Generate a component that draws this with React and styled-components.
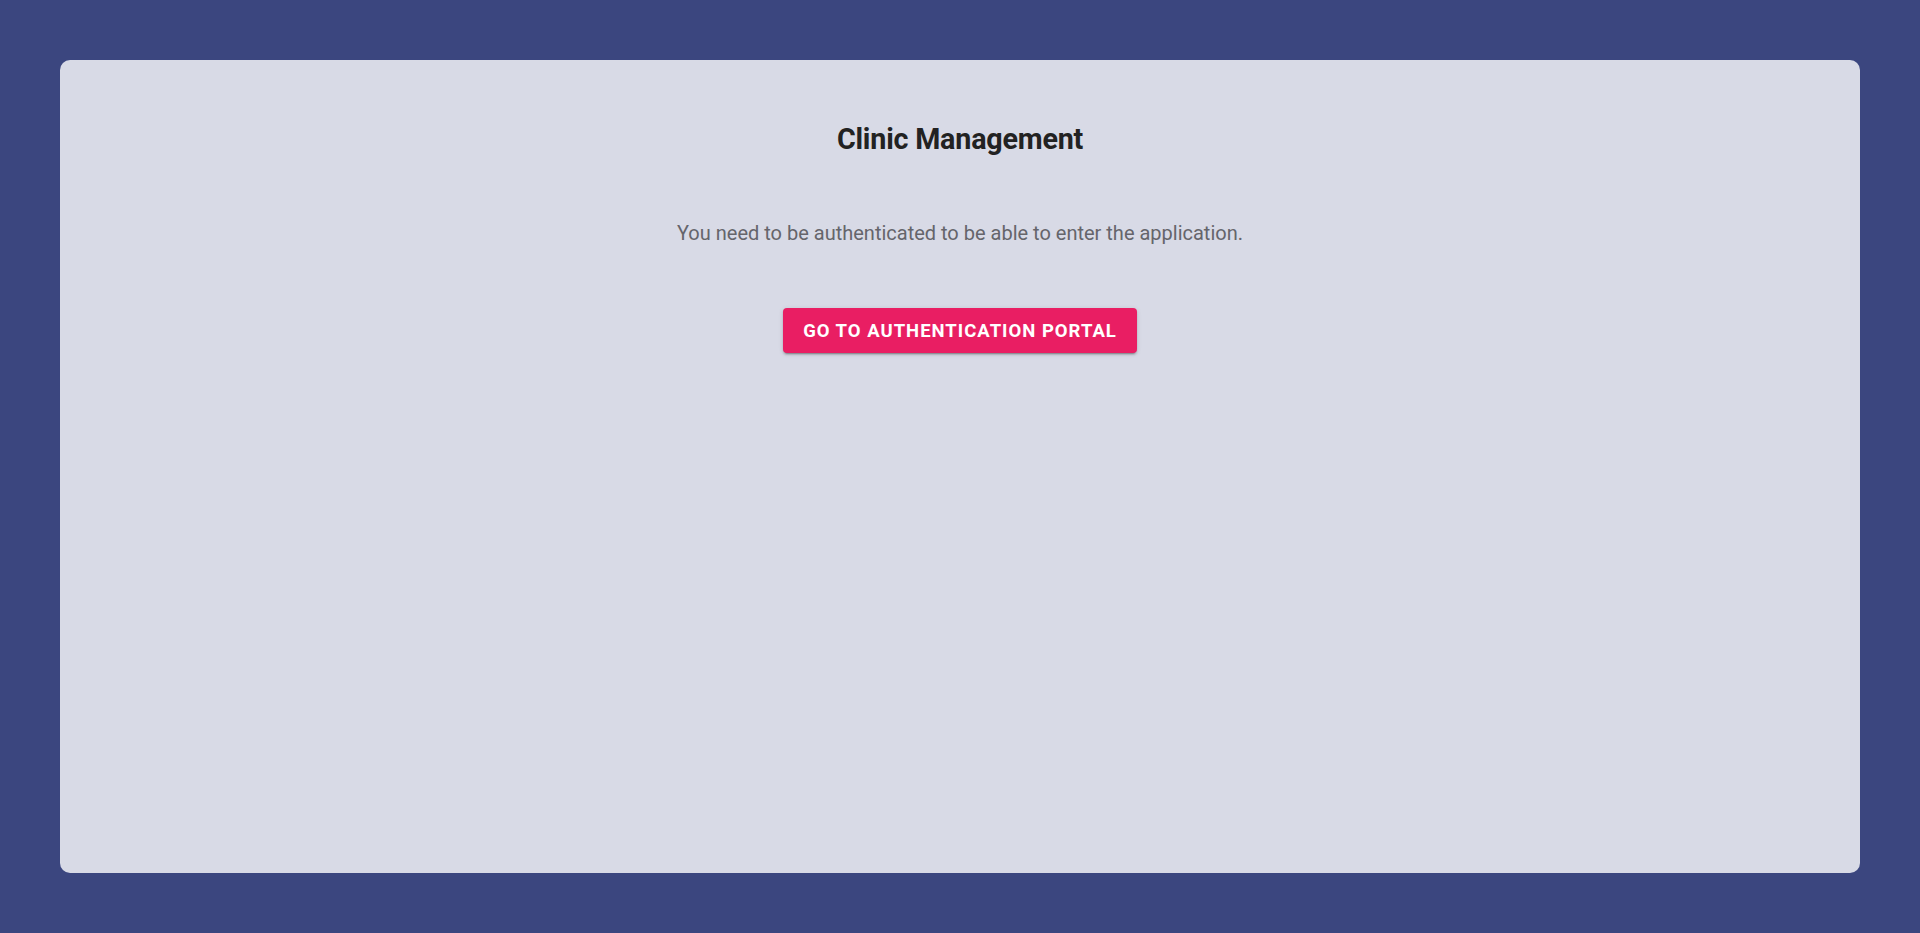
import styled, { createGlobalStyle } from "styled-components";

const GlobalStyle = createGlobalStyle`
    html, body {
        margin: 0;
        padding: 0;
        height: 100%;
        background: #3b467f;
    }
    #root {
        height: 100%;
    }
    * {
        box-sizing: border-box;
    }
`;

const Page = styled("main")`
    height: 100vh;
    padding: 60px;
    font-family: Roboto, "Liberation Sans", sans-serif;
`;

const Card = styled("section")`
    height: 100%;
    background: #d8dae6;
    border-radius: 10px;
    display: flex;
    flex-direction: column;
    align-items: center;
    padding-top: 62px;
`;

const Title = styled("h1")`
    margin: 0;
    font-size: 28.7px;
    font-weight: 700;
    color: #222222;
    letter-spacing: -0.2px;
`;

const Message = styled("p")`
    margin: 65px 0 0;
    font-size: 20px;
    font-weight: 400;
    color: #65656b;
`;

const PortalButton = styled("button")`
    margin-top: 63px;
    height: 45px;
    padding: 0 20px;
    border: none;
    border-radius: 4px;
    background: #e91e63;
    color: #ffffff;
    font-family: inherit;
    font-size: 18.5px;
    font-weight: 700;
    letter-spacing: 1px;
    text-transform: uppercase;
    cursor: pointer;
    box-shadow: 0 3px 1px -2px rgba(0, 0, 0, 0.2), 0 2px 2px 0 rgba(0, 0, 0, 0.14), 0 1px 5px 0 rgba(0, 0, 0, 0.12);
`;

export default function App() {
    return (
        <>
            <GlobalStyle />
            <Page>
                <Card>
                    <Title>Clinic Management</Title>
                    <Message>You need to be authenticated to be able to enter the application.</Message>
                    <PortalButton>Go to authentication portal</PortalButton>
                </Card>
            </Page>
        </>
    );
}
